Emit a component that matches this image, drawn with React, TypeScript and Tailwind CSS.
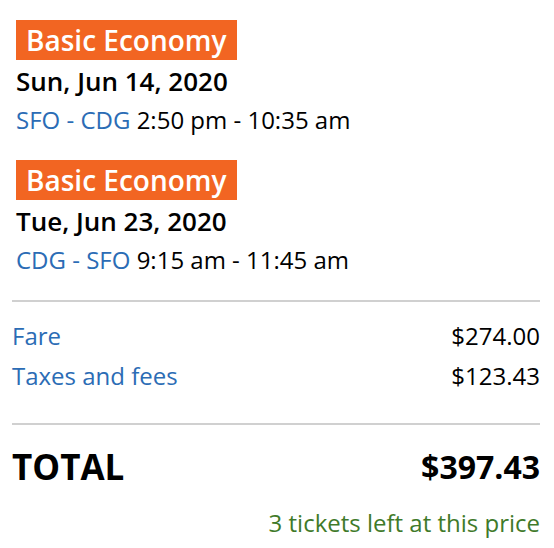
export default function App() {
    const legs = [
        { date: "Sun, Jun 14, 2020", route: "SFO - CDG", time: "2:50 pm - 10:35 am" },
        { date: "Tue, Jun 23, 2020", route: "CDG - SFO", time: "9:15 am - 11:45 am" },
    ];

    return (
        <div className="w-[554px] h-[548px] bg-white text-black" style={{ fontFamily: '"Open Sans", sans-serif' }}>
            <div className="px-[16px] pt-[20px]">
                {legs.map((leg, i) => (
                    <div key={i} className={i > 0 ? "mt-[20px]" : ""}>
                        <div className="inline-block h-[40px] bg-[#f26522] px-[10px] text-[28px] font-semibold leading-[40px] text-white">
                            Basic Economy
                        </div>
                        <div className="pt-[1px] text-[26px] font-semibold leading-[40px]">{leg.date}</div>
                        <div className="-mt-[1px] text-[24px] leading-[40px]">
                            <span className="text-[#2b6cb5]">{leg.route}</span> {leg.time}
                        </div>
                    </div>
                ))}
            </div>
            <div className="ml-[12px] mt-[20px] w-[528px] border-t-2 border-[#d0d0d0]" />
            <div className="ml-[12px] w-[528px] pt-[14px] text-[24px] leading-[40px]">
                <div className="flex justify-between">
                    <span className="text-[#2b6cb5]">Fare</span>
                    <span>$274.00</span>
                </div>
                <div className="flex justify-between">
                    <span className="text-[#2b6cb5]">Taxes and fees</span>
                    <span>$123.43</span>
                </div>
            </div>
            <div className="ml-[12px] mt-[27px] w-[528px] border-t-2 border-[#d0d0d0]" />
            <div className="ml-[12px] w-[528px] pt-[20px] flex items-center justify-between font-bold">
                <span className="text-[35px] leading-[44px]">TOTAL</span>
                <span className="text-[32px] leading-[44px]">$397.43</span>
            </div>
            <div className="ml-[12px] w-[528px] mt-[14px] text-right text-[24px] leading-[40px] text-[#3f7a2a]">
                3 tickets left at this price
            </div>
        </div>
    );
}
